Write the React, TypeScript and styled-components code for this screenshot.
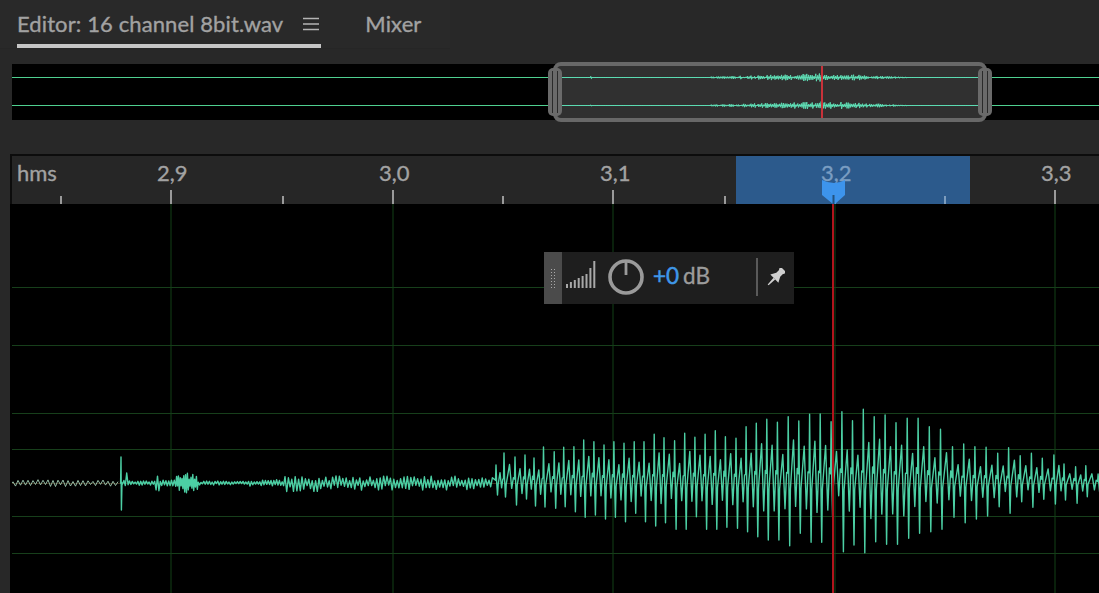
import React from "react";
import styled, { createGlobalStyle } from "styled-components";

const Global = createGlobalStyle`
  html, body { margin: 0; padding: 0; background: #282828; }
  body { font-family: Lato, "Noto Sans", sans-serif; }
`;

const Page = styled.div`
  width: 1099px; height: 593px; overflow: hidden;
  display: flex; flex-direction: column; background: #282828;
`;
const TabBar = styled.div`
  height: 48px; flex: none; display: flex; align-items: stretch;
  padding-left: 17px; gap: 44px; box-shadow: 0 1px 0 #262626; background: #292929; width: 433px;
`;
const Tab = styled.div<{ $active?: boolean }>`
  display: flex; align-items: center; gap: 20px; box-sizing: border-box;
  border-bottom: 4px solid ${p => (p.$active ? "#c6c6c6" : "transparent")};
  padding: 4px ${p => (p.$active ? "2px" : "0")} 0 0;
  font-size: 22px; letter-spacing: 0.11px; color: #a2a2a2; line-height: 40px; white-space: nowrap;
  -webkit-text-stroke: 0.35px currentColor;
`;
const MenuIcon = styled.svg`
  width: 16px; height: 14px; flex: none; display: block;
`;
const Overview = styled.div`
  position: relative; flex: none; height: 56px; margin: 16px 0 0 12px; background: #000;
`;
const OverviewLines = styled.svg`
  display: block; width: 1087px; height: 56px;
`;
const Viewport = styled.div`
  position: absolute; left: 541px; top: -2px; width: 434px; height: 60px; box-sizing: border-box;
  border: 4px solid #686868; border-radius: 8px; background: #303030; overflow: visible;
`;
const ViewportWave = styled.svg`
  position: absolute; left: -4px; top: -4px; width: 434px; height: 60px; display: block;
`;
const Handle = styled.div<{ $side: "left" | "right" }>`
  position: absolute; top: 2px; ${p => p.$side}: -9px; width: 14px; height: 48px; box-sizing: border-box;
  border-radius: 5px; background: #6a6a6a;
  &::after {
    content: ""; position: absolute; left: 4px; top: 3px; bottom: 3px; width: 4px;
    border-left: 1px solid #2a2a2a; border-right: 1px solid #2a2a2a;
  }
`;
const Ruler = styled.div`
  position: relative; flex: none; height: 48px; margin: 34px 0 0 10px;
  border-top: 2px solid #0c0c0c; border-left: 2px solid #0c0c0c; background: #262626;
`;
const Selection = styled.div`
  position: absolute; left: 724px; top: 0; width: 234px; height: 100%; background: #2c5a8c;
`;
const RulerText = styled.span<{ $selected?: boolean }>`
  position: absolute; top: 2px; font-size: 22px; line-height: 30px;
  -webkit-text-stroke: 0.35px currentColor;
  color: ${p => (p.$selected ? "#7a9dc2" : "#a2a2a2")}; white-space: nowrap;
`;
const RulerTicks = styled.svg`
  position: absolute; left: 0; top: 0; width: 1087px; height: 48px; display: block;
`;
const Track = styled.div`
  position: relative; flex: 1; margin-left: 10px; border-left: 2px solid #000; background: #000; min-height: 0;
`;
const TrackSvg = styled.svg`
  display: block; width: 1087px; height: 389px;
`;
const Hud = styled.div`
  position: absolute; left: 532px; top: 48px; width: 250px; height: 52px;
  display: flex; align-items: center; background: #1e1e1e;
`;
const Grip = styled.div`
  width: 18px; height: 100%; flex: none; background: #4b4b4b; display: flex;
  align-items: center; justify-content: center;
  &::before {
    content: ""; width: 6px; height: 21px; display: block;
    background-image: radial-gradient(circle, #a8a8a8 0.8px, transparent 1px);
    background-size: 3px 3px;
  }
`;
const Meter = styled.svg`
  width: 32px; height: 30px; margin: 0 0 6px 3px; flex: none; display: block;
`;
const Knob = styled.svg`
  width: 38px; height: 38px; margin: 0 0 3px 10px; flex: none; display: block;
`;
const Readout = styled.div`
  margin: 0 0 5px 8px; width: 103px; flex: none; font-size: 22.5px; color: #9c9c9c; white-space: nowrap;
  display: flex; gap: 4px; -webkit-text-stroke: 0.35px currentColor;
`;
const Blue = styled.span`
  color: #3f97e8; -webkit-text-stroke: 0.5px currentColor;
`;
const HudDivider = styled.div`
  width: 2px; height: 38px; margin-bottom: 2px; flex: none; background: #5a5a5a;
`;
const Pin = styled.svg`
  width: 18px; height: 18px; margin: 0 0 2px 9px; flex: none; display: block;
`;
const PlayHead = styled.svg`
  position: absolute; left: 810px; top: 24px; width: 24px; height: 24px; display: block;
`;

function rng(seed: number) {
  let s = seed;
  return () => {
    s = (s * 16807) % 2147483647;
    return s / 2147483647;
  };
}

const CENTER = 483;
const zx = (v: number) => 550 + v / 2.85;
const zy = (v: number) => 400 + v / 3;

// Upper and lower peaks read from the reference, in crop coordinates
const TOPS: [number, number][] = [
  [12,155],[39,142],[68,140],[96,120],[125,125],[154,135],[182,125],[211,130],[240,125],[268,125],
  [297,103],[325,113],[355,122],[384,100],[413,112],[442,103],[471,92],[500,110],[530,115],[559,80],
  [588,70],[618,58],[648,67],[679,50],[709,63],[740,43],[770,42],[801,65],[832,35],[862,62],
  [893,28],[924,50],[955,45],[986,68],[1018,55],[1049,55],[1081,80],[1113,88],[1147,140],[1179,132],
  [1211,140],[1243,142],[1276,160],[1307,143],[1340,167],[1372,160],[1403,175],[1436,165],[1465,192],[1498,200],
  [1527,197],[1562,222],
];
const BOTS: number[] = [
  325,320,335,352,345,357,352,365,340,365,378,368,388,388,350,388,388,382,385,395,
  410,420,420,437,400,427,427,350,455,435,458,425,433,433,415,400,395,388,352,368,
  357,348,320,340,305,322,298,312,300,310,290,275,
];

function buildQuiet(): string {
  const r = rng(2203);
  let d = `M12 ${CENTER}`;
  for (let x = 13; x < 120; x += 2.5) {
    const sign = Math.round((x - 13) / 2.5) % 2 ? 1 : -1;
    const a = 1.2 + r() * 2.4;
    d += `L${x.toFixed(1)} ${(CENTER + sign * a).toFixed(1)}`;
  }
  return d;
}

function buildWave(): string {
  const r = rng(4711);
  const pts: [number, number][] = [[120, CENTER]];
  pts.push([120.6, CENTER], [121, 457], [121.4, 510], [122, CENTER]);
  const amp = (x: number) => {
    if (x < 125.5) return 3;
    if (x < 128) return 10;
    if (x < 156) return 2;
    if (x < 159) return 13;
    if (x < 172) return 3.2;
    if (x < 176) return 5;
    if (x < 198) return 9.5 - Math.abs(x - 186) * 0.25;
    if (x < 250) return 1.8;
    if (x < 284) return 3;
    if (x < 320) return 8;
    if (x < 470) return 6.5;
    return 5.5;
  };
  let x = 122.5;
  while (x < 494) {
    const a = amp(x);
    const sign = pts.length % 2 ? 1 : -1;
    const firm = x >= 125.5 && x < 128;
    pts.push([x, CENTER + sign * a * (firm ? 1 : 0.3 + r() * 0.8)]);
    x += x > 175 && x < 198 ? 0.9 : x > 284 ? 1.7 : 1.4;
  }
  const lead: [number, number, number][] = [
    [496, 465, 495],[504, 453, 497],[515, 457, 505],[525, 455, 499],[534, 458, 506],[543.5, 447, 507],
  ];
  const peaks: [number, number, number][] = [
    ...lead,
    ...TOPS.map(([tx, t], i): [number, number, number] => [zx(tx), zy(t), zy(BOTS[i])]),
  ];
  peaks.forEach(([px, top, bot], i) => {
    const next = peaks[i + 1];
    const p = next ? next[0] - px : 10;
    const up = CENTER - top;
    const down = bot - CENTER;
    const j = () => 0.8 + r() * 0.4;
    pts.push([px - 0.5, CENTER - up * 0.15]);
    pts.push([px, top]);
    pts.push([px + 0.6, CENTER - up * 0.1]);
    pts.push([px + 1.5, bot]);
    pts.push([px + 2.2, CENTER + down * 0.1]);
    pts.push([px + p * 0.5, CENTER - up * 0.55 * j()]);
    pts.push([px + p * 0.7, CENTER + down * 0.45 * j()]);
    pts.push([px + p * 0.85, CENTER - up * 0.2 * j()]);
  });
  return pts.map(([px, py], i) => `${i ? "L" : "M"}${px.toFixed(1)} ${py.toFixed(1)}`).join("");
}

function buildMini(y: number, seed: number): string {
  const r = rng(seed);
  let d = `M0 ${y}`;
  const env = (x: number) => {
    if (x < 710) return x > 588 && x < 590 ? 2 : 0;
    if (x < 820) return 0.8 + ((x - 710) / 110) * 3.4;
    if (x < 905) return 4.4 - ((x - 820) / 85) * 3.8;
    return 0;
  };
  for (let x = 552; x < 990; x += 1.8) {
    const a = env(x) * (0.2 + r() * 0.8);
    d += `L${(x - 552).toFixed(1)} ${(y - a).toFixed(1)}L${(x - 551.4).toFixed(1)} ${(y + a).toFixed(1)}`;
  }
  return d;
}

const WAVE = buildWave();
const QUIET = buildQuiet();
const MINI_A = buildMini(15.5, 91);
const MINI_B = buildMini(43.5, 137);

const LABELS = [
  { t: "hms", x: 17 },
  { t: "2,9", x: 157 },
  { t: "3,0", x: 379 },
  { t: "3,1", x: 600 },
  { t: "3,2", x: 821, selected: true },
  { t: "3,3", x: 1041 },
];
const MAJOR = [171, 393, 613, 835, 1055];
const MINOR = [61, 283, 503, 725, 945];
const H_LINES = [287, 345, 413, 449, 516, 553];
const BARS = [4, 6, 8, 10, 12, 14, 20, 27];

export default function App() {
  return (
    <Page>
      <Global />
      <TabBar>
        <Tab $active>
          Editor: 16 channel 8bit.wav
          <MenuIcon viewBox="0 0 16 14">
            <path d="M0 1.5h16M0 7h16M0 12.5h16" stroke="#b4b4b4" strokeWidth="1.6" />
          </MenuIcon>
        </Tab>
        <Tab>Mixer</Tab>
      </TabBar>

      <Overview>
        <OverviewLines viewBox="0 0 1087 56">
          <path d="M0 13.5H1087M0 41.5H1087" stroke="#4fd090" strokeWidth="1" />
        </OverviewLines>
        <Viewport>
          <ViewportWave viewBox="0 0 434 60">
            <path d="M0 15.5H434M0 43.5H434" stroke="#4fd8aa" strokeWidth="1" />
            <path d={MINI_A} stroke="#5fdcb4" strokeWidth="1" fill="none" />
            <path d={MINI_B} stroke="#5fdcb4" strokeWidth="1" fill="none" />
            <rect x="268" y="4" width="2" height="52" fill="#c8323a" />
          </ViewportWave>
          <Handle $side="left" />
          <Handle $side="right" />
        </Viewport>
      </Overview>

      <Ruler>
        <Selection />
        {LABELS.map(l => (
          <RulerText key={l.t} $selected={l.selected} style={{ left: l.x - 12 }}>
            {l.t}
          </RulerText>
        ))}
        <RulerTicks viewBox="12 156 1087 48">
          {MAJOR.map(x => (
            <rect key={x} x={x - 1} y={190} width={2} height={14} fill={x > 736 && x < 970 ? "#7d9dbe" : "#9a9a9a"} />
          ))}
          {MINOR.map(x => (
            <rect key={x} x={x - 1} y={196} width={2} height={8} fill={x > 736 && x < 970 ? "#7d9dbe" : "#9a9a9a"} />
          ))}
        </RulerTicks>
        <PlayHead viewBox="0 0 24 24">
          <path d="M0 0 Q6 3 12 3 Q18 3 23 0 V15 L13 24 H11 L0 15 Z" fill="#3d94ec" />
          <rect x="10.5" y="15" width="2" height="9" fill="#23527f" />
        </PlayHead>
      </Ruler>

      <Track>
        <TrackSvg viewBox="12 204 1087 389">
          {H_LINES.map(y => (
            <rect key={y} x={12} y={y} width={1087} height={1} fill="#173f1b" />
          ))}
          {MAJOR.map(x => (
            <rect key={x} x={x - 0.5} y={204} width={1} height={389} fill="#124016" />
          ))}
          <rect x={12} y={483} width={1087} height={1} fill="#3a2e1c" />
          <path d={QUIET} stroke="#a2cdb4" strokeWidth="0.9" fill="none" strokeLinejoin="round" />
          <path d={WAVE} stroke="#4ccfa4" strokeWidth="1.4" fill="none" strokeLinejoin="round" />
          <rect x={832} y={204} width={2} height={389} fill="#b0141c" />
        </TrackSvg>
        <Hud>
          <Grip />
          <Meter viewBox="0 0 32 30">
            {BARS.map((h, i) => (
              <rect key={i} x={1 + i * 3.9} y={28 - h} width={2} height={h} fill="#a8a8a8" />
            ))}
          </Meter>
          <Knob viewBox="0 0 38 38">
            <circle cx="19" cy="19" r="16" stroke="#9a9a9a" strokeWidth="3.6" fill="none" />
            <rect x="17.6" y="3" width="2.8" height="14" fill="#9a9a9a" />
          </Knob>
          <Readout>
            <Blue>+0</Blue>
            <span>dB</span>
          </Readout>
          <HudDivider />
          <Pin viewBox="-8.5 -8.5 17 17">
            <g transform="rotate(45)" fill="#cfcfcf">
              <rect x="-3.4" y="-10" width="6.8" height="3" rx="0.8" />
              <rect x="-2.6" y="-8" width="5.2" height="6" />
              <path d="M-2.6 -3 L-5.4 2.2 H5.4 L2.6 -3 Z" />
              <path d="M-1.1 2.2 H1.1 L0.6 10.5 H-0.6 Z" />
            </g>
          </Pin>
        </Hud>
      </Track>
    </Page>
  );
}
